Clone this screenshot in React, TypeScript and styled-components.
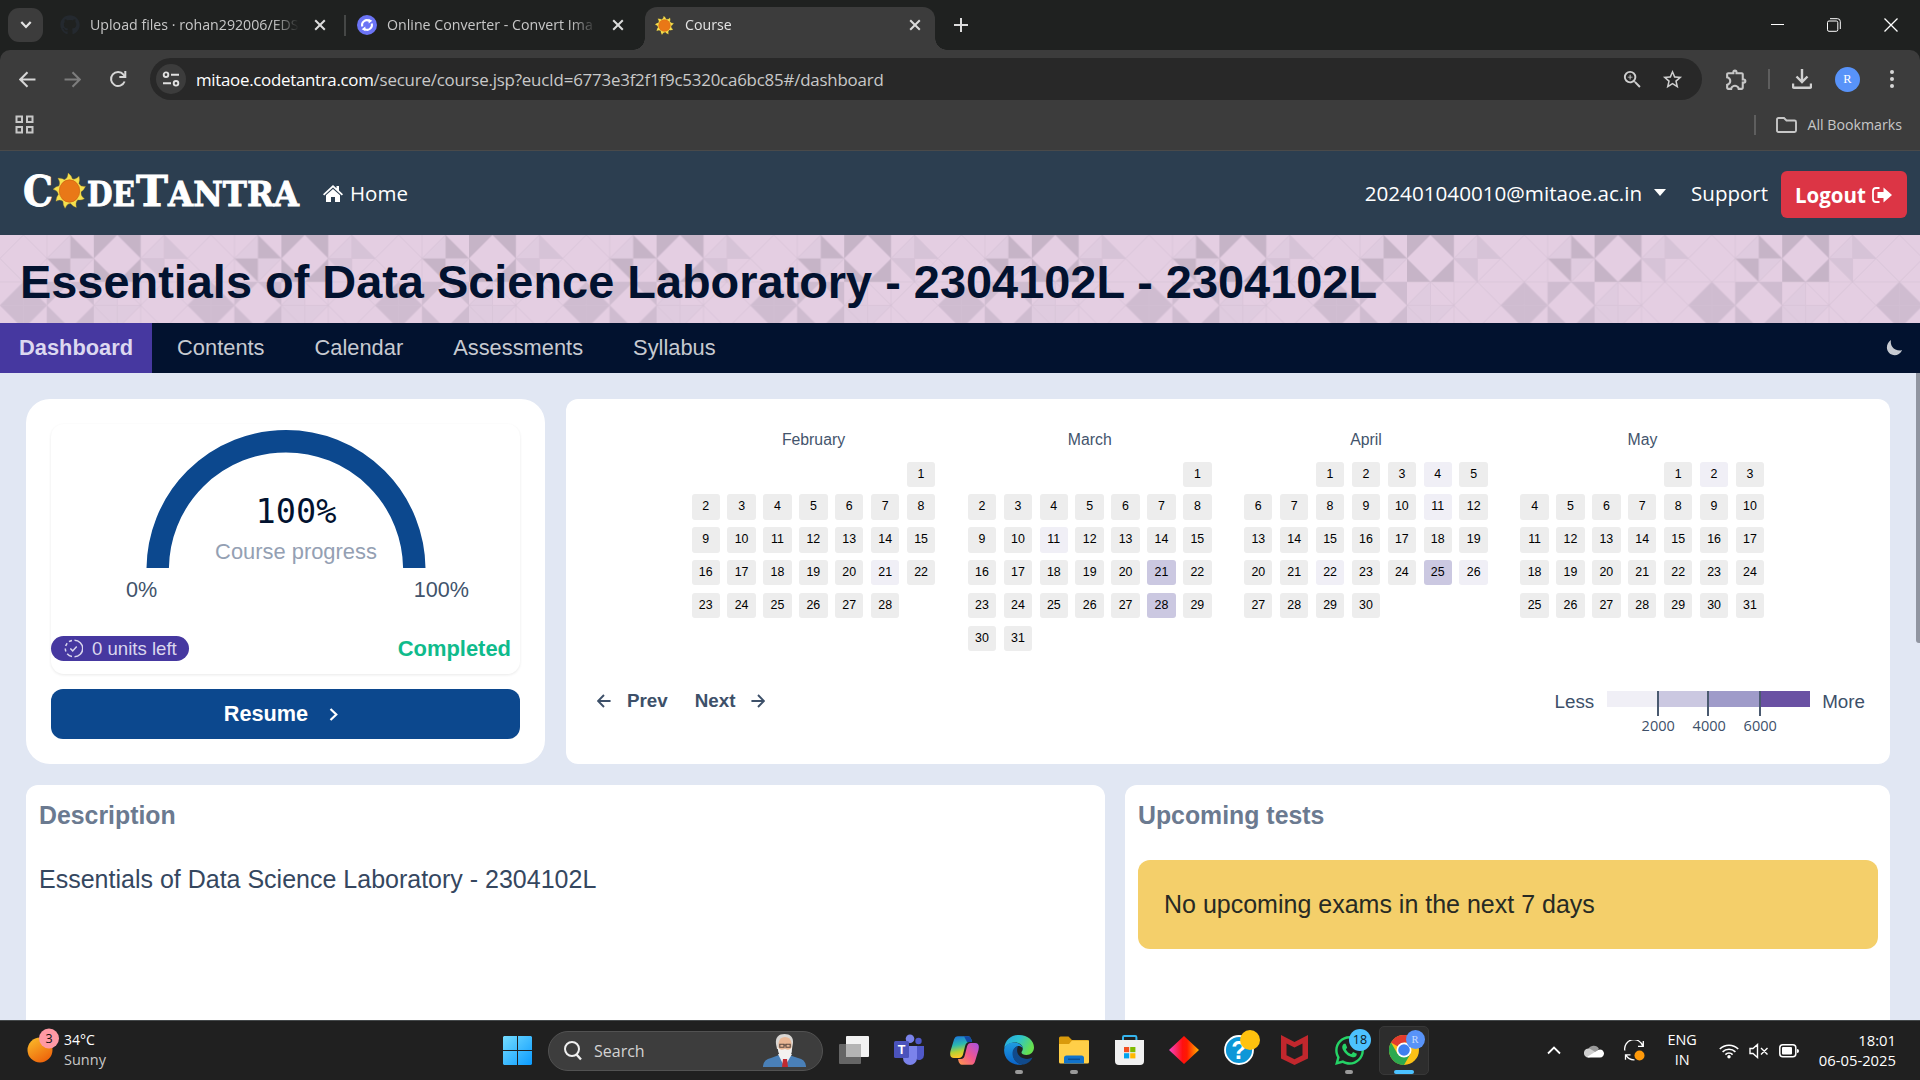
import React from "react";
import styled, { createGlobalStyle } from "styled-components";
import { FaGithub, FaWhatsapp } from "react-icons/fa";
import { MdOutlineExtension, MdStarOutline, MdZoomIn } from "react-icons/md";

const SEGOE = '"Open Sans", "Noto Sans", sans-serif';
const ARIAL = '"Liberation Sans", Arial, sans-serif';

const GlobalStyle = createGlobalStyle`
  *, *::before, *::after { box-sizing: border-box; }
  html, body { margin: 0; padding: 0; }
  body { background: #202020; font-family: ${ARIAL}; overflow: hidden; }
  svg { display: block; flex: none; }
`;

const Screen = styled.div`
  width: 1920px;
  height: 1080px;
  display: flex;
  flex-direction: column;
  overflow: hidden;
`;

const Label = styled.span<{ $size: number; $color?: string; $bold?: boolean; $track?: number; $ui?: boolean }>`
  font-family: ${(p) => (p.$ui ? SEGOE : ARIAL)};
  font-size: ${(p) => p.$size}px;
  font-weight: ${(p) => (p.$bold ? 700 : 400)};
  color: ${(p) => p.$color ?? "inherit"};
  letter-spacing: ${(p) => p.$track ?? 0}px;
  white-space: nowrap;
`;

/* ---------- browser ---------- */

const TabStrip = styled.div`
  height: 50px;
  flex: none;
  display: flex;
  align-items: center;
  background: #1f2120;
  padding-left: 8px;
`;

const TabSearch = styled.div`
  width: 35px;
  height: 34px;
  border-radius: 11px;
  background: #3c3c3c;
  display: grid;
  place-items: center;
`;

const Tab = styled.div<{ $width: number; $active?: boolean }>`
  position: relative;
  width: ${(p) => p.$width}px;
  height: 43px;
  margin-top: 7px;
  padding: 0 ${(p) => (p.$active ? 14 : 13)}px 7px 10px;
  display: flex;
  align-items: center;
  border-radius: 12px 12px 0 0;
  background: ${(p) => (p.$active ? "#3c3c3c" : "transparent")};
  &::before,
  &::after {
    content: "";
    display: ${(p) => (p.$active ? "block" : "none")};
    position: absolute;
    bottom: 0;
    width: 12px;
    height: 12px;
  }
  &::before {
    left: -12px;
    background: radial-gradient(circle at 0 0, transparent 11.5px, #3c3c3c 12px);
  }
  &::after {
    right: -12px;
    background: radial-gradient(circle at 100% 0, transparent 11.5px, #3c3c3c 12px);
  }
`;

const TabTitle = styled.span<{ $active?: boolean }>`
  flex: 1;
  margin: 0 15px 0 ${(p) => (p.$active ? 11 : 10)}px;
  overflow: hidden;
  white-space: nowrap;
  font: 14.2px/22px ${SEGOE};
  color: ${(p) => (p.$active ? "#e3e3e3" : "#c7c7c7")};
  mask-image: linear-gradient(to right, #000 calc(100% - 26px), transparent);
`;

const TabRule = styled.div`
  width: 2px;
  height: 21px;
  background: #454746;
`;

const NewTab = styled.div`
  margin-left: 19px;
`;

const WindowControls = styled.div`
  margin-left: auto;
  margin-right: 22px;
  display: flex;
  align-items: center;
  gap: 43px;
`;

const ToolbarShell = styled.div`
  flex: none;
  height: 101px;
  background: #1f2120;
`;

const Toolbar = styled.div`
  height: 101px;
  background: #3c3c3c;
  border-radius: 10px 10px 0 0;
  border-bottom: 1px solid #4a4a4a;
`;

const AddressRow = styled.div`
  height: 58px;
  padding-left: 19px;
  display: flex;
  align-items: center;
`;

const NavIcons = styled.div`
  width: 131px;
  display: flex;
  align-items: center;
  gap: 28px;
`;

const Omnibox = styled.div`
  width: 1552px;
  height: 42px;
  border-radius: 21px;
  background: #282828;
  display: flex;
  align-items: center;
  padding: 0 18px 0 6px;
`;

const SiteInfo = styled.div`
  width: 30px;
  height: 30px;
  border-radius: 50%;
  background: #3c3c3c;
  display: grid;
  place-items: center;
  margin-right: 10px;
`;

const OmniIcons = styled.div`
  margin-left: auto;
  display: flex;
  gap: 17px;
`;

const ToolbarIcons = styled.div`
  flex: 1;
  display: flex;
  align-items: center;
  padding-left: 22px;
`;

const Rule = styled.div<{ $ml: number; $mr: number }>`
  width: 2px;
  height: 20px;
  background: #5e5e5e;
  margin-left: ${(p) => p.$ml}px;
  margin-right: ${(p) => p.$mr}px;
`;

const Avatar = styled.div`
  width: 25px;
  height: 25px;
  border-radius: 50%;
  background: #5893f9;
  color: #fff;
  display: grid;
  place-items: center;
  font: 12.5px/25px "Liberation Serif", serif;
  margin: 0 30px 0 23px;
`;

const BookmarkRow = styled.div`
  height: 33px;
  display: flex;
  align-items: center;
  padding: 0 18px 0 15px;
`;

const BookmarkEnd = styled.div`
  margin-left: auto;
  display: flex;
  align-items: center;
`;

/* ---------- site header ---------- */

const SiteHeader = styled.header`
  flex: none;
  height: 84px;
  background: #2c3e50;
  color: #fff;
  display: flex;
  align-items: center;
  padding: 0 13px 0 23px;
`;

const HomeLink = styled.a`
  display: flex;
  align-items: center;
  gap: 7px;
  margin-left: 22px;
`;

const HeaderRight = styled.div`
  margin-left: auto;
  display: flex;
  align-items: center;
`;

const Caret = styled.div`
  border: 6px solid transparent;
  border-top: 7px solid #fff;
  border-bottom: 0;
  margin: -2px 25px 0 12px;
`;

const Logout = styled.button`
  width: 126px;
  height: 47px;
  margin: 3px 0 0 13px;
  border: 0;
  border-radius: 6px;
  background: #dc3545;
  color: #fff;
  display: flex;
  align-items: center;
  gap: 6px;
  padding: 0 0 0 14px;
`;

const Banner = styled.div`
  flex: none;
  height: 88px;
  background: #e4cee2;
  display: grid;
`;

const BannerArt = styled.div`
  grid-area: 1 / 1;
`;

const BannerTitle = styled.h1`
  grid-area: 1 / 1;
  margin: 0;
  padding: 6px 0 0 20px;
  align-self: center;
  font: 700 46.9px/56px ${ARIAL};
  color: #02122f;
  white-space: nowrap;
`;

const CourseNav = styled.nav`
  flex: none;
  height: 50px;
  background: #02122f;
  display: flex;
  align-items: center;
  padding-right: 17px;
`;

const NavTab = styled.a<{ $active?: boolean }>`
  height: 50px;
  padding: ${(p) => (p.$active ? "0 19px" : "0 25px")};
  font: ${(p) => (p.$active ? 700 : 400)} 21.85px/50px ${ARIAL};
  color: ${(p) => (p.$active ? "#dcd8f0" : "#c7cad1")};
  background: ${(p) => (p.$active ? "#4638a0" : "transparent")};
`;

/* ---------- dashboard ---------- */

const Main = styled.main`
  flex: 1;
  min-height: 0;
  background: #e1e7f3;
  display: flex;
  overflow: hidden;
`;

const Board = styled.div`
  flex: 1;
  padding: 26px 26px 0 26px;
  display: flex;
  flex-direction: column;
  gap: 21px;
`;

const ScrollThumb = styled.div`
  width: 4px;
  height: 270px;
  background: #9095a0;
  border-radius: 0 0 0 3px;
`;

const Row = styled.div<{ $cols: string; $gap: number; $height: number }>`
  display: grid;
  flex: none;
  grid-template-columns: ${(p) => p.$cols};
  gap: ${(p) => p.$gap}px;
  height: ${(p) => p.$height}px;
`;

const Card = styled.section<{ $radius: number; $pad: string }>`
  background: #fff;
  border-radius: ${(p) => p.$radius}px;
  padding: ${(p) => p.$pad};
  overflow: hidden;
  display: flex;
  flex-direction: column;
`;

const ProgressBox = styled.div`
  height: 250px;
  border-radius: 13px;
  box-shadow: 0 1px 3px rgba(0, 0, 0, 0.09);
  padding-top: 6px;
  flex: none;
  display: flex;
  flex-direction: column;
`;

const Gauge = styled.div`
  height: 138px;
  display: grid;
  justify-items: center;
  > * { grid-area: 1 / 1; }
`;

const GaugeText = styled.div`
  padding: 62px 0 0 21px;
  display: flex;
  flex-direction: column;
  align-items: center;
  color: #94a0b3;
  line-height: 39px;
`;

const GaugeValue = styled.span`
  font: 33.6px/40px "DejaVu Sans Mono", monospace;
  color: #02122f;
`;

const GaugeEnds = styled.div`
  display: flex;
  justify-content: space-between;
  padding: 0 51px 0 75px;
  margin-top: 9px;
  line-height: 25px;
  color: #41536b;
`;

const StatusRow = styled.div`
  display: flex;
  justify-content: space-between;
  align-items: center;
  margin-top: 34px;
  padding-right: 9px;
  height: 25px;
`;

const UnitsBadge = styled.div`
  width: 138px;
  height: 25px;
  border-radius: 13px;
  background: #4638a0;
  display: flex;
  align-items: center;
  gap: 9px;
  padding-left: 13px;
  color: #dad6ee;
`;

const Resume = styled.button`
  margin-top: 15px;
  height: 50px;
  flex: none;
  border: 0;
  border-radius: 12px;
  background: #0c488e;
  color: #fff;
  display: flex;
  align-items: center;
  justify-content: center;
  gap: 21px;
  padding: 0 9px 0 0;
`;

const Months = styled.div`
  display: flex;
  gap: 32.3px;
  padding-left: 125.5px;
  height: 270px;
`;

const Month = styled.div`
  width: 244px;
  text-align: center;
`;

const MonthName = styled.div`
  font: 15.8px/24px ${ARIAL};
  color: #43546c;
  margin-bottom: 9.5px;
`;

const Days = styled.div`
  display: grid;
  grid-template-columns: repeat(7, 28.4px);
  gap: 7.5px;
`;

const shades = ["#ededed", "#f0eff6", "#cbc8e1"];

const Day = styled.div<{ $level: number; $start?: number }>`
  height: 25.35px;
  border-radius: 3px;
  background: ${(p) => shades[p.$level]};
  font: 12.4px/25.35px ${ARIAL};
  color: #000;
  ${(p) => (p.$start ? `grid-column-start: ${p.$start};` : "")}
`;

const CalendarFooter = styled.div`
  display: flex;
  align-items: flex-start;
  color: #3d5069;
  padding: 0 25px 0 31px;
  margin-top: -9px;
`;

const Pager = styled.div`
  display: flex;
  align-items: center;
  height: 24px;
  gap: 16px;
`;

const PagerGap = styled.div`
  width: 27px;
  margin: 0 -16px;
`;

const Legend = styled.div`
  margin-left: auto;
  display: flex;
  line-height: 26px;
  gap: 12.5px;
`;

const Scale = styled.div`
  width: 203px;
  padding-top: 2px;
`;

const ScaleBar = styled.div`
  display: grid;
  grid-template-columns: 50px 50px 52px 51px;
`;

const Swatch = styled.div<{ $fill: string; $tick?: boolean }>`
  height: 25px;
  background: linear-gradient(${(p) => p.$fill} 16px, transparent 16px);
  border-left: ${(p) => (p.$tick ? "2px solid #4a5a70" : "0")};
`;

const ScaleLabels = styled.div`
  display: grid;
  grid-template-columns: 51px 51px 51px;
  padding-left: 26px;
  text-align: center;
  font: 14.5px/20px ${SEGOE};
`;

const SectionTitle = styled.h2`
  margin: 0;
  font: 700 24.85px/31px ${ARIAL};
  color: #6b7a90;
`;

const Paragraph = styled.p`
  margin: 33px 0 0;
  font: 25px/30px ${ARIAL};
  color: #35475f;
`;

const Alert = styled.div`
  margin-top: 29px;
  height: 89px;
  border-radius: 12px;
  background: #f4cf6a;
  color: #272a24;
  font: 25px/89px ${ARIAL};
  padding-left: 26px;
`;

/* ---------- taskbar ---------- */

const Taskbar = styled.footer`
  flex: none;
  height: 60px;
  background: #202020;
  border-top: 1px solid #44484a;
  display: flex;
  align-items: center;
  color: #fff;
`;

const Weather = styled.div`
  width: 503px;
  display: flex;
  align-items: center;
  padding-left: 27px;
  gap: 4px;
  > svg { margin-top: -10px; }
`;

const Stack = styled.div<{ $align: string }>`
  display: flex;
  flex-direction: column;
  align-items: ${(p) => p.$align};
  line-height: 20px;
  padding-bottom: 2px;
`;

const SearchBox = styled.div`
  width: 275px;
  height: 40px;
  margin: 0 6px 0 16px;
  border-radius: 20px;
  border: 1px solid #525252;
  background: #3d3d3d;
  display: flex;
  align-items: center;
  padding: 0 16px 0 14px;
`;

const SearchText = styled.span`
  flex: 1;
  margin-left: 12px;
  font: 16px/22px ${SEGOE};
  color: #d3d3d3;
`;

const AppSlot = styled.div<{ $active?: boolean }>`
  position: relative;
  width: 50px;
  height: 49px;
  margin: 0 5px 1px 0;
  border-radius: 5px;
  display: grid;
  place-items: center;
  background: ${(p) => (p.$active ? "#2d2d2d" : "transparent")};
  border: 1px solid ${(p) => (p.$active ? "#383838" : "transparent")};
`;

const Running = styled.div<{ $active?: boolean }>`
  position: absolute;
  bottom: 0;
  width: ${(p) => (p.$active ? 20 : 8)}px;
  height: 4px;
  border-radius: 2px;
  background: ${(p) => (p.$active ? "#4cc2ff" : "#9a9a9a")};
`;

const CountBadge = styled.div<{ $bg: string; $size: number; $color?: string; $serif?: boolean }>`
  position: absolute;
  left: ${(p) => 35 - p.$size / 2}px;
  top: ${(p) => 13 - p.$size / 2}px;
  width: ${(p) => p.$size}px;
  height: ${(p) => p.$size}px;
  border-radius: 50%;
  background: ${(p) => p.$bg};
  color: ${(p) => p.$color ?? "#0c1a24"};
  font: ${(p) => (p.$serif ? '10.5px "Liberation Serif", serif' : `12.5px ${SEGOE}`)};
  line-height: ${(p) => p.$size}px;
  text-align: center;
`;

const Tray = styled.div`
  margin-left: auto;
  display: flex;
  align-items: center;
  padding-right: 24px;
`;

const Gap = styled.div<{ $w: number }>`
  width: ${(p) => p.$w}px;
  flex: none;
`;

/* ---------- drawings ---------- */

const sunPath = (() => {
  const pts: string[] = [];
  const n = 9;
  for (let i = 0; i < n; i++) {
    const a = (i / n) * Math.PI * 2 - 1.65;
    const at = (ang: number, r: number) => `${(50 + Math.cos(ang) * r).toFixed(1)} ${(50 + Math.sin(ang) * r).toFixed(1)}`;
    pts.push(`${i === 0 ? "M" : "L"}${at(a - 0.33, 35)} Q${at(a - 0.05, 36)} ${at(a, 50)} Q${at(a + 0.22, 43)} ${at(a + 0.32, 35)}`);
  }
  return pts.join(" ") + "Z";
})();

const Sun = ({ w, h }: { w: number; h: number }) => (
  <svg width={w} height={h} viewBox="0 0 100 100" preserveAspectRatio="none">
    <path d={sunPath} fill="#f5e04e" stroke="#c9a227" strokeWidth="1" />
    <circle cx="50" cy="50" r="31" fill="#e97817" stroke="#cf6410" strokeWidth="2" />
  </svg>
);

const LogoLetters = styled.text`
  font-family: "DejaVu Serif", serif;
  font-weight: 700;
  fill: #fff;
  stroke: #fff;
  stroke-width: 0.9px;
`;

const Logo = () => (
  <svg width="278" height="44" viewBox="0 0 278 44">
    <LogoLetters x="0" y="35" fontSize="43" textLength="30" lengthAdjust="spacingAndGlyphs">C</LogoLetters>
    <LogoLetters x="64" y="35" fontSize="33.5" textLength="48" lengthAdjust="spacingAndGlyphs">DE</LogoLetters>
    <LogoLetters x="113" y="35" fontSize="43" textLength="32" lengthAdjust="spacingAndGlyphs">T</LogoLetters>
    <LogoLetters x="145" y="35" fontSize="33.5" textLength="131" lengthAdjust="spacingAndGlyphs">ANTRA</LogoLetters>
    <g transform="translate(30 2)"><Sun w={33} h={36} /></g>
  </svg>
);

const U = 23.45;
const tri = (pts: number[], fill: string, key: number) => (
  <polygon key={key} fill={fill} points={pts.map((v) => v * U).join(" ")} />
);
const corners = (x: number, y: number) => [
  [x, y, x + 1, y, x, y + 1],
  [x + 1, y, x + 2, y, x + 2, y + 1],
  [x, y + 1, x, y + 2, x + 1, y + 2],
  [x + 2, y + 1, x + 2, y + 2, x + 1, y + 2],
];
const darkShapes = [...corners(4, 0), [3, 0, 3, 1, 4, 1], [2, 1, 3, 1, 3, 2]];
const midShapes = [...corners(2, 2), [1, 2, 0, 3, 1, 4, 2, 3]];
const softShapes = [[7, 0, 7, 1, 8, 1], [6, 1, 7, 1, 7, 2], [2, 1, 3, 0, 3, 1]];
const faintShapes = [[5, 2, 5, 3, 4, 3], [4, 3, 5, 3, 5, 4, 4, 4], [5, 3, 6, 3, 5, 4], [3, 1, 4, 1, 3, 2], [6, 1, 7, 0, 7, 1]];

const Geometry = () => (
  <svg width="1920" height="88">
    <defs>
      <pattern id="geo" width={U * 8} height={U * 4} patternUnits="userSpaceOnUse">
        {faintShapes.map((s, i) => tri(s, "#dfcbdf", i))}
        {softShapes.map((s, i) => tri(s, i === 2 ? "#dfcbdf" : "#d6c3d7", i))}
        {midShapes.map((s, i) => tri(s, "#cfbcd0", i))}
        {darkShapes.map((s, i) => tri(s, "#c6b4c7", i))}
        <g stroke="#d3bfd2" strokeOpacity="0.55" strokeWidth="1" fill="none">
          {[0, 2, 4, 6].map((x) =>
            [0, 2].map((y) => (
              <path key={`${x}-${y}`} d={`M${(x + 1) * U} ${y * U}L${(x + 2) * U} ${(y + 1) * U}L${(x + 1) * U} ${(y + 2) * U}L${x * U} ${(y + 1) * U}Z`} />
            ))
          )}
          <path d={`M${2 * U} 0V${4 * U}M${6 * U} 0V${4 * U}M${3 * U} 0V${2 * U}M${7 * U} 0V${2 * U}M${U} ${2 * U}V${4 * U}M${5 * U} ${2 * U}V${4 * U}M0 ${2 * U}H${8 * U}M${2 * U} ${U}H${4 * U}M${6 * U} ${U}H${8 * U}M0 ${3 * U}H${2 * U}M${4 * U} ${3 * U}H${6 * U}`} />
        </g>
      </pattern>
    </defs>
    <rect width="1920" height="88" fill="url(#geo)" />
  </svg>
);

const Cross = () => (
  <svg width="12" height="12" viewBox="0 0 12 12" stroke="#dcdcdc" strokeWidth="2"><path d="M1.2 1.2l9.6 9.6M10.8 1.2L1.2 10.8" /></svg>
);

const Arrow = ({ size, width, left, color }: { size: number; width: number; left?: boolean; color: string }) => (
  <svg width={size} height={size} viewBox="0 0 16 16" fill="none" stroke={color} strokeWidth={width}>
    <path d={left ? "M15.5 8h-14M8 1.2L1.200 8 8 14.8" : "M0.5 8h14M8 1.2L14.8 8 8 14.8"} />
  </svg>
);

const Teams = () => (
  <svg width="30" height="32" viewBox="0 0 30 32">
    <circle cx="24.5" cy="7" r="3.2" fill="#5059c9" />
    <circle cx="16" cy="4.8" r="4.3" fill="#7b83eb" />
    <path d="M20 12h10v9a5 5 0 0 1-8 4z" fill="#5059c9" />
    <path d="M9 12h14v12a7 7 0 0 1-14 0z" fill="#7b83eb" />
    <rect y="7" width="15" height="17" rx="1.5" fill="#4b53bc" />
    <text x="7.5" y="20" textAnchor="middle" fontFamily="Liberation Sans" fontWeight="700" fontSize="12.5" fill="#fff">T</text>
  </svg>
);

const Copilot = () => (
  <svg width="29" height="31" viewBox="0 0 29 27" preserveAspectRatio="none">
    <defs>
      <linearGradient id="cpA" x1="0" y1="0" x2="0.2" y2="1"><stop stopColor="#1a6fe0" /><stop offset=".45" stopColor="#2bb8b0" /><stop offset=".75" stopColor="#b5d334" /><stop offset="1" stopColor="#ffc629" /></linearGradient>
      <linearGradient id="cpB" x1="1" y1="0" x2="0" y2="1"><stop stopColor="#a452e6" /><stop offset=".5" stopColor="#f0568f" /><stop offset="1" stopColor="#ff9a4a" /></linearGradient>
    </defs>
    <path d="M8 1h10q3 0 4 5h-3q-3 0-4 4l-2 7q-1 3-4 3H4Q-1 20 .5 14L4 4q1-3 4-3z" fill="url(#cpA)" />
    <path d="M14 1h4q3 0 4 5h-5z" fill="#1348a5" />
    <path d="M21 26H12q-3 0-4-5h3q3 0 4-4l2-7q1-3 4-3h4q5 0 3.500 6L25 23q-1 3-4 3z" fill="url(#cpB)" />
  </svg>
);

const Edge = () => (
  <svg width="30" height="30" viewBox="0 0 30 30">
    <defs>
      <linearGradient id="egA" x1="0" y1="0" x2="1" y2=".4"><stop stopColor="#2aa6e0" /><stop offset=".5" stopColor="#2cc3cf" /><stop offset="1" stopColor="#66e04f" /></linearGradient>
      <linearGradient id="egB" x1="0" y1="0" x2="0" y2="1"><stop stopColor="#1f9ce0" /><stop offset="1" stopColor="#0a63c9" /></linearGradient>
    </defs>
    <path d="M.3 13C1 5 7 0 15 0c9 0 15 6 15 12.500 0 4.500-3.500 7.500-7.500 7.500-3 0-5-1-5-2.500 0-1 1.300-1.500 1.300-4C18.800 10 15 7.500 11 7.500 6 7.500 2 10 .3 13z" fill="url(#egA)" />
    <path d="M.2 14C1 10 5 7.500 10 7.500c5 0 8.800 3 8.800 6-1-2-3-2.500-4.800-2.500-3 1-5 4-5 7.500 0 6 4 10.500 10 11C8 31.500-.8 24 .2 14z" fill="url(#egB)" />
    <path d="M14 11c-3.500 1-5.500 4-5.500 7.500 0 6 5 11.500 11.500 11 4-1 7-3.500 8.500-7-3 1.500-6 1.800-9 .8-5-1.600-8-6.300-5.500-12.300z" fill="#114a8b" />
  </svg>
);

const Folder = () => (
  <svg width="30" height="28" viewBox="0 0 30 28">
    <path d="M0 2q0-1.500 1.500-1.500h8L13 4h15.500Q30 4 30 5.500V10H0z" fill="#d99a0b" />
    <path d="M0 8h10l3-3.500h17V26q0 1.500-1.500 1.500h-27Q0 27.500 0 26z" fill="#ffcf48" />
    <path d="M5 27.500V22q0-2.500 2.500-2.500h15Q25 19.500 25 22v5.500z" fill="#1173cb" />
    <path d="M9 23.300h12" stroke="#0b4f94" strokeWidth="1.500" />
  </svg>
);

const Store = () => (
  <svg width="29" height="30" viewBox="0 0 29 30">
    <path d="M8 6V2.200Q8 1 9.200 1h11Q21.400 1 21.400 2.200V6" fill="none" stroke="#35b5ee" strokeWidth="2" />
    <path d="M0 5h29v21q0 4-4 4H4q-4 0-4-4z" fill="#f1f1f1" />
    <path d="M9 12h5.200v5.200H9z" fill="#f25022" /><path d="M15.200 12h5.200v5.200h-5.200z" fill="#7fba00" />
    <path d="M9 18.200h5.200v5.200H9z" fill="#00a4ef" /><path d="M15.200 18.200h5.200v5.200h-5.200z" fill="#ffb900" />
  </svg>
);

const Chrome = () => (
  <svg width="30" height="30" viewBox="0 0 30 30">
    <circle cx="15" cy="15" r="15" fill="#fbc116" />
    <path d="M15 15L2 7.500A15 15 0 0 1 28 7.500H15z" fill="#e33b2e" />
    <path d="M2 7.500A15 15 0 0 0 15 30l6.500-11.200L15 15 8.500 18.800z" fill="#2da94f" />
    <circle cx="15" cy="15" r="7.500" fill="#fff" />
    <circle cx="15" cy="15" r="5.800" fill="#3f7ff0" />
  </svg>
);

const Person = () => (
  <svg width="43" height="33" viewBox="0 0 43 33">
    <path d="M0 32q1-7 8-8l8-3h10l9 3q7 1 8 8v1H0z" fill="#4a80b8" />
    <path d="M15 20l6.500 13L29 20z" fill="#eef1f5" />
    <path d="M20 25h4l1 8h-6z" fill="#c22a30" />
    <path d="M13 10C12 3 16 0 21.500 0s9 3 8.500 9l-1 6H14z" fill="#d9d6d3" />
    <path d="M15.500 9q1-6 6.500-6t6.500 6v7q-2 5-6.500 5t-6.500-5z" fill="#eab795" />
    <path d="M14.500 13q2 4 7.500 2 5 2 7-2 .5 11-6.500 12-7 0-8-12z" fill="#f3f2f0" />
    <path d="M16.800 10.200h4.200v3h-4.200zM23 10.200h4.200v3H23zM21 11h2" fill="none" stroke="#5b4a42" strokeWidth="1.100" />
  </svg>
);

/* ---------- data ---------- */

const months = [
  { name: "February", offset: 6, days: 28, level: { 21: 1 } },
  { name: "March", offset: 6, days: 31, level: { 11: 1, 21: 2, 28: 2 } },
  { name: "April", offset: 2, days: 30, level: { 4: 1, 11: 1, 22: 1, 25: 2, 26: 1 } },
  { name: "May", offset: 4, days: 31, level: { 2: 1 } },
] as { name: string; offset: number; days: number; level: Record<number, number> }[];

const navItems = ["Dashboard", "Contents", "Calendar", "Assessments", "Syllabus"];

/* ---------- sections ---------- */

const BrowserTabs = () => (
  <TabStrip>
    <TabSearch>
      <svg width="12" height="8" viewBox="0 0 12 8" fill="none" stroke="#e3e3e3" strokeWidth="2.200"><path d="M1.300 1L6 6l4.700-5" /></svg>
    </TabSearch>
    <Gap $w={7} />
    <Tab $width={289}>
      <FaGithub size={20} color="#24292f" />
      <TabTitle>Upload files · rohan292006/EDS</TabTitle>
      <Cross />
    </Tab>
    <Gap $w={5} />
    <TabRule />
    <Gap $w={1} />
    <Tab $width={290}>
      <svg width="20" height="20" viewBox="0 0 20 20">
        <circle cx="10" cy="10" r="10" fill="#6b74f5" />
        <path d="M5.300 11.500A4.800 4.800 0 0 1 12.500 6M14.700 8.500A4.800 4.800 0 0 1 7.500 14" fill="none" stroke="#fff" strokeWidth="2" />
        <path d="M11.500 3.800l3.800 2-3.600 2.700zM8.500 16.200l-3.800-2 3.600-2.700z" fill="#fff" />
      </svg>
      <TabTitle>Online Converter - Convert Ima</TabTitle>
      <Cross />
    </Tab>
    <Gap $w={8} />
    <Tab $width={290} $active>
      <Sun w={19} h={19} />
      <TabTitle $active>Course</TabTitle>
      <Cross />
    </Tab>
    <NewTab>
      <svg width="14" height="14" viewBox="0 0 14 14" stroke="#dcdcdc" strokeWidth="2"><path d="M7 0v14M0 7h14" /></svg>
    </NewTab>
    <WindowControls>
      <svg width="13" height="13" viewBox="0 0 13 13" stroke="#fff"><path d="M0 5.500h13" /></svg>
      <svg width="14" height="14" viewBox="0 0 14 14" stroke="#fff" fill="none"><path d="M3 .7h7.500q2.800 0 2.800 2.800V11" /><rect x=".5" y="3" width="10.300" height="10.300" rx="1.500" /></svg>
      <svg width="14" height="14" viewBox="0 0 14 14" stroke="#fff" strokeWidth="1.300"><path d="M.5.500l13 13M13.500.500l-13 13" /></svg>
    </WindowControls>
  </TabStrip>
);

const BrowserToolbar = () => (
  <ToolbarShell>
    <Toolbar>
      <AddressRow>
        <NavIcons>
          <Arrow size={17} width={1.9} left color="#d6d6d6" />
          <Arrow size={17} width={1.9} color="#7d7d7d" />
          <svg width="18" height="18" viewBox="0 0 18 18" fill="none" stroke="#d6d6d6" strokeWidth="2"><path d="M15.600 11.500A7 7 0 1 1 14.500 4.600L16 6.500" /><path d="M16.300 1v6H10.300" /></svg>
        </NavIcons>
        <Omnibox>
          <SiteInfo>
            <svg width="18" height="16" viewBox="0 0 18 16" fill="none" stroke="#e0e0e0" strokeWidth="1.900"><circle cx="4" cy="3.700" r="2.300" /><path d="M9 3.700h8M1 12.300h8" /><circle cx="14" cy="12.300" r="2.300" /></svg>
          </SiteInfo>
          <Label $ui $size={16.9} $track={-0.21} $color="#c9c9c9">
            <Label $ui $size={16.9} $track={-0.3} $color="#ffffff">mitaoe.codetantra.com</Label>
            /secure/course.jsp?eucId=6773e3f2f1f9c5320ca6bc85#/dashboard
          </Label>
          <OmniIcons>
            <MdZoomIn size={23} color="#cfcfcf" />
            <MdStarOutline size={23} color="#cfcfcf" />
          </OmniIcons>
        </Omnibox>
        <ToolbarIcons>
          <MdOutlineExtension size={25} color="#c7c7c7" />
          <Rule $ml={19} $mr={22} />
          <svg width="20" height="20" viewBox="0 0 20 20" fill="none" stroke="#d0d0d0" strokeWidth="2.400"><path d="M10 0v12.500M4.500 7.500L10 13l5.500-5.500" /><path d="M1 14.500v3q0 1.300 1.300 1.300h15.400q1.300 0 1.300-1.300v-3" /></svg>
          <Avatar>R</Avatar>
          <svg width="4" height="18" viewBox="0 0 4 18" fill="#d6d6d6"><circle cx="2" cy="2" r="2" /><circle cx="2" cy="9" r="2" /><circle cx="2" cy="16" r="2" /></svg>
        </ToolbarIcons>
      </AddressRow>
      <BookmarkRow>
        <svg width="19" height="19" viewBox="0 0 19 19" fill="none" stroke="#c7c7c7" strokeWidth="2"><path d="M1.500 1.500h5.500v5.500H1.500zM12 1.500h5.500v5.500H12zM1.500 12h5.500v5.500H1.500zM12 12h5.500v5.500H12z" /></svg>
        <BookmarkEnd>
          <Rule $ml={0} $mr={20} />
          <svg width="21" height="16" viewBox="0 0 21 16" fill="none" stroke="#c7c7c7" strokeWidth="1.900"><path d="M1 13.500V2.500Q1 1 2.500 1H8l2.500 2.500h8Q20 3.500 20 5v8.500Q20 15 18.500 15h-16Q1 15 1 13.500z" /></svg>
          <Gap $w={10} />
          <Label $ui $size={14.2}>
            <Label $ui $size={14.2} $color="#c7c7c7">All Bookmarks</Label>
          </Label>
        </BookmarkEnd>
      </BookmarkRow>
    </Toolbar>
  </ToolbarShell>
);

const Header = () => (
  <SiteHeader>
    <Logo />
    <HomeLink>
      <svg width="20" height="17" viewBox="0 0 20 17" fill="#fff"><path d="M10 0l3.500 3.200V1H16v4.600L20 9.200l-1.200 1.300L10 2.600 1.200 10.500 0 9.200z" /><path d="M10 4l7 6.200V17h-5v-5H8v5H3v-6.800z" /></svg>
      <Label $ui $size={20.5}>Home</Label>
    </HomeLink>
    <HeaderRight>
      <Label $ui $size={20.65}>202401040010@mitaoe.ac.in</Label>
      <Caret />
      <Label $ui $size={20.5}>Support</Label>
      <Logout>
        <Label $ui $bold $size={20.5}>Logout</Label>
        <svg width="20" height="16" viewBox="0 0 20 16" fill="#fff"><path d="M7.500 1H4Q1 1 1 4v8q0 3 3 3h3.500" fill="none" stroke="#fff" strokeWidth="1.800" /><path d="M5.500 5h6V.500L20 8l-8.500 7.500V11h-6z" /></svg>
      </Logout>
    </HeaderRight>
  </SiteHeader>
);

const ProgressCard = () => (
  <Card $radius={24} $pad="25px">
    <ProgressBox>
      <Gauge>
        <svg width="280" height="138" viewBox="0 0 280 138"><circle cx="140" cy="139.500" r="128.300" fill="none" stroke="#0c488e" strokeWidth="22.400" /></svg>
        <GaugeText>
          <GaugeValue>100%</GaugeValue>
          <Label $size={21.9}>Course progress</Label>
        </GaugeText>
      </Gauge>
      <GaugeEnds>
        <Label $size={21.6}>0%</Label>
        <Label $size={21.6}>100%</Label>
      </GaugeEnds>
      <StatusRow>
        <UnitsBadge>
          <svg width="19" height="19" viewBox="0 0 19 19" fill="none" stroke="#dad6ee" strokeWidth="1.500"><path d="M10.500 1.300a8.200 8.200 0 0 1 0 16.400M8 1.400a8.200 8.200 0 0 0-3 1.300M3.200 4.200a8.200 8.200 0 0 0-1.500 2.700M1.300 9.500a8.200 8.200 0 0 0 .6 3M3.200 14.800a8.200 8.200 0 0 0 4.800 2.800" /><path d="M6.300 9.500l2.400 2.400 4-4.400" /></svg>
          <Label $size={18.6}>0 units left</Label>
        </UnitsBadge>
        <Label $bold $size={21.95} $color="#10bb8c">Completed</Label>
      </StatusRow>
    </ProgressBox>
    <Resume>
      <Label $bold $size={21.7}>Resume</Label>
      <svg width="9" height="13" viewBox="0 0 9 13" fill="none" stroke="#fff" strokeWidth="2.200"><path d="M1.500 1l5.800 5.500-5.800 5.500" /></svg>
    </Resume>
  </Card>
);

const CalendarCard = () => (
  <Card $radius={12} $pad="29px 0 0 0">
    <Months>
      {months.map((m) => (
        <Month key={m.name}>
          <MonthName>{m.name}</MonthName>
          <Days>
            {Array.from({ length: m.days }, (_, i) => (
              <Day key={i} $level={m.level[i + 1] ?? 0} $start={i === 0 ? m.offset + 1 : undefined}>{i + 1}</Day>
            ))}
          </Days>
        </Month>
      ))}
    </Months>
    <CalendarFooter>
      <Pager>
        <Arrow size={14} width={2.2} left color="#3d5069" />
        <Label $bold $size={18.8}>Prev</Label>
        <PagerGap />
        <Label $bold $size={18.8}>Next</Label>
        <Arrow size={14} width={2.2} color="#3d5069" />
      </Pager>
      <Legend>
        <Label $size={18.8}>Less</Label>
        <Scale>
          <ScaleBar>
            <Swatch $fill="#f0eff6" />
            <Swatch $fill="#cbc8e1" $tick />
            <Swatch $fill="#9f9bc9" $tick />
            <Swatch $fill="#6a51a3" $tick />
          </ScaleBar>
          <ScaleLabels><span>2000</span><span>4000</span><span>6000</span></ScaleLabels>
        </Scale>
        <Label $size={18.8}>More</Label>
      </Legend>
    </CalendarFooter>
  </Card>
);

const TaskbarView = () => (
  <Taskbar>
    <Weather>
      <svg width="33" height="36" viewBox="0 0 33 36">
        <defs><linearGradient id="day" x1="0" y1="0" x2=".6" y2="1"><stop stopColor="#fbc02b" /><stop offset="1" stopColor="#ee660c" /></linearGradient></defs>
        <circle cx="13" cy="22" r="12.500" fill="url(#day)" />
        <circle cx="22" cy="10.500" r="10" fill="#ff99a4" />
        <text x="22" y="15" fontFamily="Open Sans" fontSize="12.500" textAnchor="middle" fill="#111">3</text>
      </svg>
      <Stack $align="flex-start">
        <Label $ui $size={14}>34°C</Label>
        <Label $ui $size={14.5} $color="#c8c8c8">Sunny</Label>
      </Stack>
    </Weather>
    <svg width="29" height="29" viewBox="0 0 29 29">
      <defs><linearGradient id="win" x1="0" y1="0" x2="1" y2="1"><stop stopColor="#74dcff" /><stop offset="1" stopColor="#0b9bff" /></linearGradient></defs>
      <path d="M1 0h13v14H0V1zM15 0h13l1 1v13H15zM0 15h14v14H1l-1-1zM15 15h14v13l-1 1H15z" fill="url(#win)" />
    </svg>
    <SearchBox>
      <svg width="19" height="20" viewBox="0 0 19 20" fill="none" stroke="#f0f0f0" strokeWidth="2"><circle cx="9" cy="8" r="7" /><path d="M13.500 13.500l4.500 5" strokeWidth="2.400" /></svg>
      <SearchText>Search</SearchText>
      <Person />
    </SearchBox>
    <AppSlot>
      <svg width="30" height="28" viewBox="0 0 30 28"><rect x="7" width="23" height="21" rx="1" fill="#f2f2f2" /><rect y="8" width="22" height="20" rx="1" fill="#777" fillOpacity=".8" /><path d="M7 8h15v13H7z" fill="#b4b4b4" /></svg>
    </AppSlot>
    <AppSlot><Teams /></AppSlot>
    <AppSlot><Copilot /></AppSlot>
    <AppSlot><Edge /><Running /></AppSlot>
    <AppSlot><Folder /><Running /></AppSlot>
    <AppSlot><Store /></AppSlot>
    <AppSlot>
      <svg width="30" height="30" viewBox="0 0 30 30"><defs><linearGradient id="dia"><stop stopColor="#f545c8" /><stop offset=".45" stopColor="#ff1010" /><stop offset=".6" stopColor="#ff1a00" /><stop offset="1" stopColor="#ffb400" /></linearGradient></defs><path d="M15 1l15 14-15 14L0 15z" fill="url(#dia)" /></svg>
    </AppSlot>
    <AppSlot>
      <svg width="30" height="30" viewBox="0 0 30 30"><circle cx="15" cy="15" r="14" fill="#0d97d8" stroke="#fff" strokeWidth="1.800" /><text x="15" y="24" textAnchor="middle" fontFamily="Liberation Sans" fontWeight="700" fontSize="25" fill="#fff">?</text></svg>
      <CountBadge $bg="#ffc20e" $size={20} />
    </AppSlot>
    <AppSlot>
      <svg width="27" height="30" viewBox="0 0 27 30" fill="#c1272d"><path d="M0 0l13.500 7L27 0v23.500L13.500 30 0 23.500zM5.500 8.500v11.800l8 4 8-4V8.500l-8 4z" fillRule="evenodd" /></svg>
    </AppSlot>
    <AppSlot><FaWhatsapp size={33} color="#25d366" /><CountBadge $bg="#4cc2ff" $size={22}>18</CountBadge><Running /></AppSlot>
    <AppSlot $active><Chrome /><CountBadge $bg="#5893f9" $size={19} $color="#c9dcfb" $serif>R</CountBadge><Running $active /></AppSlot>
    <Tray>
      <svg width="14" height="9" viewBox="0 0 14 9" fill="none" stroke="#fff" strokeWidth="1.800"><path d="M1 7.500L7 1.500l6 6" /></svg>
      <Gap $w={23} />
      <svg width="20" height="14" viewBox="0 0 20 14"><path d="M4 6a6 6 0 0 1 11-1l-5 4z" fill="#9a9a9a" /><path d="M4.500 13.500a4.500 4.500 0 1 1 1.500-8.700L16 11z" fill="#cfcfcf" /><path d="M3 13L14 6a4 4 0 1 1 2 7.500H4.500z" fill="#fff" /></svg>
      <Gap $w={20} />
      <svg width="21" height="21" viewBox="0 0 21 21" fill="none" stroke="#fff" strokeWidth="1.300"><path d="M.8 10.500A9.300 9.300 0 0 1 18.800 6M19.300 1v5.300h-5.300M10.500 19.800A9.300 9.300 0 0 1 2 15.200M1.500 19.800V14.800H6.500" /><circle cx="15.500" cy="15.500" r="5" fill="#ff9a0a" stroke="none" /></svg>
      <Gap $w={22} />
      <Stack $align="center"><Label $ui $size={14.4}>ENG</Label><Label $ui $size={14.4}>IN</Label></Stack>
      <Gap $w={22} />
      <svg width="20" height="16" viewBox="0 0 20 16" fill="none" stroke="#fff" strokeWidth="1.600"><path d="M.8 6a13 13 0 0 1 18.400 0M3.600 8.900a9 9 0 0 1 12.800 0M6.400 11.600a5 5 0 0 1 7.200 0" /><circle cx="10" cy="13.800" r="1.700" fill="#fff" stroke="none" /></svg>
      <Gap $w={10} />
      <svg width="20" height="16" viewBox="0 0 20 16" fill="none" stroke="#fff" strokeWidth="1.400"><path d="M1 5.500h3l4.500-4v13L4 10.500H1zM12 5l6.500 6.500M18.500 5L12 11.500" /></svg>
      <Gap $w={10} />
      <svg width="20" height="14" viewBox="0 0 20 14"><rect x=".8" y=".8" width="16" height="12" rx="3" fill="none" stroke="#fff" strokeWidth="1.500" /><rect x="3" y="3" width="10" height="7.600" rx="1" fill="#fff" /><path d="M18 5q2 0 2 2t-2 2z" fill="#fff" /></svg>
      <Gap $w={20} />
      <Stack $align="flex-end"><Label $ui $size={14.8}>18:01</Label><Label $ui $size={14.8}>06-05-2025</Label></Stack>
    </Tray>
  </Taskbar>
);

export default function App() {
  return (
    <Screen>
      <GlobalStyle />
      <BrowserTabs />
      <BrowserToolbar />
      <Header />
      <Banner>
        <BannerArt><Geometry /></BannerArt>
        <BannerTitle>Essentials of Data Science Laboratory - 2304102L - 2304102L</BannerTitle>
      </Banner>
      <CourseNav>
        {navItems.map((n, i) => <NavTab key={n} $active={i === 0}>{n}</NavTab>)}
        <HeaderRight>
          <svg width="17" height="17" viewBox="0 0 17 19" fill="#c7cad1"><path d="M4.500 0C3.500 6 7 12.500 17 11.500 15 15.500 12 17 8.800 17 4 17 0 13.500 0 8.500 0 5 1.800 1.800 4.500 0z" /></svg>
        </HeaderRight>
      </CourseNav>
      <Main>
        <Board>
          <Row $cols="519px 1324px" $gap={21} $height={365}>
            <ProgressCard />
            <CalendarCard />
          </Row>
          <Row $cols="1079px 765px" $gap={20} $height={400}>
            <Card $radius={12} $pad="15px 13px">
              <SectionTitle>Description</SectionTitle>
              <Paragraph>Essentials of Data Science Laboratory - 2304102L</Paragraph>
            </Card>
            <Card $radius={12} $pad="15px 12px 15px 13px">
              <SectionTitle>Upcoming tests</SectionTitle>
              <Alert>No upcoming exams in the next 7 days</Alert>
            </Card>
          </Row>
        </Board>
        <ScrollThumb />
      </Main>
      <TaskbarView />
    </Screen>
  );
}
